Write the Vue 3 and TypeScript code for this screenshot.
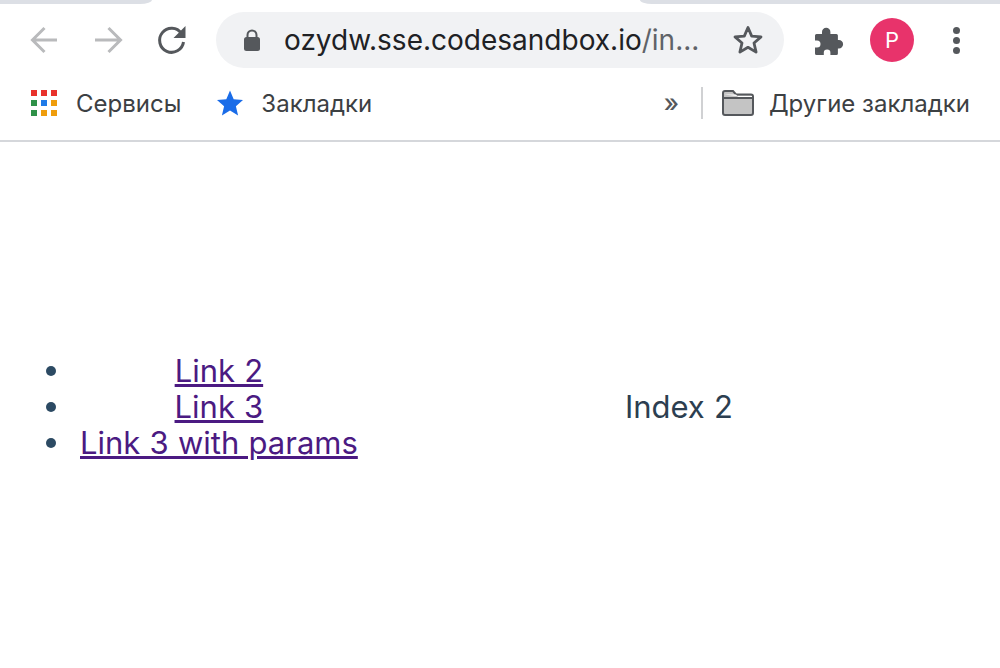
<template>
  <div class="window">
    <header class="chrome">
      <div class="tabstrip">
        <div class="tab-left"></div>
        <div class="tab-active"></div>
        <div class="tab-right"></div>
      </div>
      <div class="toolbar">
        <svg class="nav-icon" width="32" height="32" viewBox="0 0 32 32" fill="none" stroke="#b9babc" stroke-width="3">
          <path d="M29 16H5M16.500 4 4.500 16 16.500 28" />
        </svg>
        <svg class="nav-icon" width="32" height="32" viewBox="0 0 32 32" fill="none" stroke="#b9babc" stroke-width="3">
          <path d="M3 16h25M16.500 4 28.500 16 16.500 28" />
        </svg>
        <svg class="nav-icon" width="32" height="32" viewBox="0 0 32 32" fill="none">
          <path d="M25.500 9.500A12 12 0 1 0 27.500 18" stroke="#55585c" stroke-width="3" />
          <path d="M29.500 2v12h-12z" fill="#55585c" />
        </svg>
        <div class="omnibox">
          <svg width="20" height="24" viewBox="0 0 20 24" fill="none">
            <path d="M5.500 10V7a4.500 4.500 0 0 1 9 0v3" stroke="#55585c" stroke-width="2" />
            <rect x="2" y="9" width="16" height="14" rx="2.500" fill="#55585c" />
          </svg>
          <span class="url"><b>ozydw.sse.codesandbox.io</b>/in...</span>
          <svg width="32" height="32" viewBox="0 0 32 32" fill="none" stroke="#55585c" stroke-width="2.800" stroke-linejoin="round">
            <path d="M16 3.500l3.700 8.600 9.300.8-7 6.100 2.100 9.100-8.100-4.800-8.100 4.800 2.100-9.100-7-6.100 9.300-.8z" />
          </svg>
        </div>
        <svg class="puzzle" width="32" height="32" viewBox="0 0 32 32" fill="#55585c">
          <path d="M3 11.500a1.500 1.500 0 0 1 1.500-1.500H10V8a4.200 4.200 0 0 1 8.400 0v2h6a1.500 1.500 0 0 1 1.500 1.500V16h1a4.200 4.200 0 0 1 0 8.400h-1v5.100a1.500 1.500 0 0 1-1.500 1.500h-6v-2.200a3.300 3.300 0 0 0-6.600 0V31H4.500A1.500 1.500 0 0 1 3 29.500v-6h2a3.500 3.500 0 0 0 0-7H3z" />
        </svg>
        <div class="avatar">P</div>
        <div class="menu"><i></i><i></i><i></i></div>
      </div>
      <div class="bookmarks">
        <div class="bookmark">
          <div class="apps">
            <i v-for="(c, i) in appColors" :key="i" :style="{ background: c }"></i>
          </div>
          <span>Сервисы</span>
        </div>
        <div class="bookmark starred">
          <svg width="28" height="28" viewBox="0 0 28 28" fill="#1a6ce8">
            <path d="M14 1.500l3.700 8.700 9.300.8-7.100 6.200 2.200 9.300-8.100-4.900-8.100 4.900 2.200-9.300L1 11l9.300-.8z" />
          </svg>
          <span>Закладки</span>
        </div>
        <div class="bookmarks-end">
          <span class="more">»</span>
          <div class="divider"></div>
          <svg width="34" height="28" viewBox="0 0 34 28" fill="none">
            <path d="M2 6V4a2 2 0 0 1 2-2h8l3 3.500h15a2 2 0 0 1 2 2V24a2 2 0 0 1-2 2H4a2 2 0 0 1-2-2z" fill="#c4c4c4" stroke="#55585c" stroke-width="2" />
            <path d="M3 5.500h12l2 2.500h14V7H15z" fill="#fff" />
            <path d="M2 9h30" stroke="#55585c" stroke-width="2" />
          </svg>
          <span class="other">Другие закладки</span>
        </div>
      </div>
    </header>
    <main class="page">
      <ul class="links">
        <li v-for="link in links" :key="link"><a href="#">{{ link }}</a></li>
      </ul>
      <div class="view">Index 2</div>
    </main>
  </div>
</template>

<script setup lang="ts">
const links: string[] = ['Link 2', 'Link 3', 'Link 3 with params']

const red = '#e8322c'
const green = '#2f9148'
const blue = '#1f7ae8'
const orange = '#ef9d0c'
const appColors: string[] = [red, red, red, green, blue, orange, green, orange, orange]
</script>

<style>
html,
body {
  margin: 0;
  background: #fff;
}
</style>

<style scoped>
.window {
  display: flex;
  flex-direction: column;
  width: 1000px;
  height: 668px;
  overflow: hidden;
  font-family: Inter, "Noto Sans", sans-serif;
  color: #2c3e50;
}

.chrome {
  flex: none;
  height: 142px;
  box-sizing: border-box;
  border-bottom: 2px solid #d5d7db;
  background: #fff;
}

.tabstrip {
  display: flex;
  height: 4px;
  overflow: hidden;
}

.tab-left {
  width: 152px;
  background: #dcdfe5;
  border-bottom-right-radius: 12px 4px;
}

.tab-active {
  flex: 1;
}

.tab-right {
  width: 360px;
  background: #dcdfe5;
  border-bottom-left-radius: 12px 4px;
}

.toolbar {
  display: flex;
  align-items: center;
  height: 72px;
  padding-left: 28px;
}

.nav-icon {
  flex: none;
  margin-right: 32px;
}

.nav-icon:nth-child(3) {
  margin-right: 28px;
}

.omnibox {
  display: flex;
  align-items: center;
  width: 568px;
  height: 56px;
  box-sizing: border-box;
  padding: 0 20px 0 26px;
  border-radius: 28px;
  background: #f1f2f4;
}

.url {
  flex: 1;
  margin-left: 22px;
  font-size: 28px;
  white-space: nowrap;
  color: #5f6368;
}

.url b {
  font-weight: 400;
  color: #202124;
}

.puzzle {
  margin-left: 28px;
}

.avatar {
  width: 44px;
  height: 44px;
  margin-left: 26px;
  border-radius: 50%;
  background: #e8336b;
  color: #fff;
  font-size: 22px;
  line-height: 44px;
  text-align: center;
}

.menu {
  display: flex;
  flex-direction: column;
  gap: 3px;
  margin-left: 39px;
}

.menu i {
  width: 7px;
  height: 7px;
  border-radius: 50%;
  background: #55585c;
}

.bookmarks {
  display: flex;
  align-items: center;
  height: 54px;
  padding: 0 30px 0 31px;
  font-size: 24px;
  color: #3c4043;
}

.bookmark {
  display: flex;
  align-items: center;
  gap: 19px;
}

.starred {
  gap: 17px;
  margin-left: 35px;
}

.apps {
  display: grid;
  grid-template-columns: repeat(3, 6px);
  grid-auto-rows: 6px;
  gap: 4px;
}

.bookmarks-end {
  display: flex;
  align-items: center;
  margin-left: auto;
}

.more {
  font-size: 25px;
  font-weight: 500;
  color: #55585c;
}

.divider {
  width: 2px;
  height: 32px;
  margin: 0 18px 0 22px;
  background: #d0d1d3;
}

.other {
  margin-left: 14px;
}

.page {
  flex: 1;
  display: flex;
  align-items: center;
  padding-top: 4px;
  font-size: 31px;
  line-height: 36px;
  word-spacing: 0.5px;
}

.links {
  flex: none;
  margin: 0;
  padding-left: 80px;
  list-style: none;
  text-align: center;
}

.links li {
  position: relative;
}

.links li::before {
  content: "";
  position: absolute;
  left: -34px;
  top: 13px;
  width: 10px;
  height: 10px;
  border-radius: 50%;
  background: #2c4a63;
}

.links a {
  color: #4b1a82;
}

.view {
  flex: 1;
  text-align: center;
}
</style>
